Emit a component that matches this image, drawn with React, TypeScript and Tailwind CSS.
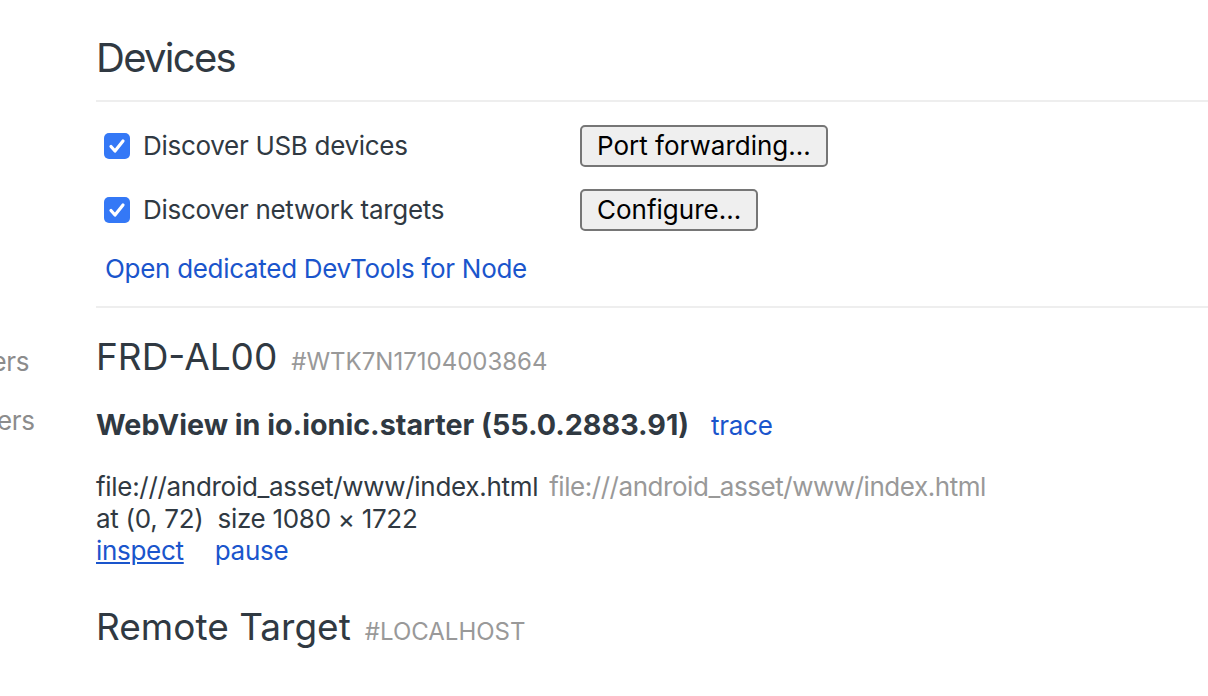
import React from "react";

const sidebarItems = [
  "Devices",
  "Pages",
  "Extensions",
  "Apps",
  "Shared workers",
  "Service workers",
  "Other",
];

function Checkbox() {
  return (
    <div className="w-[26px] h-[26px] rounded-[5px] bg-[#3478f6] flex items-center justify-center flex-shrink-0">
      <svg className="w-[20px] h-[20px]" viewBox="0 0 20 20" fill="none">
        <path
          d="M4 10.5l4 4.5 8-10"
          stroke="white"
          strokeWidth={3.2}
          strokeLinecap="round"
          strokeLinejoin="round"
        />
      </svg>
    </div>
  );
}

function OptionRow({ label, button }: { label: string; button: string }) {
  return (
    <div className="flex items-center h-[64px]">
      <div className="w-[476px] flex items-center gap-[13px]">
        <Checkbox />
        <span>{label}</span>
      </div>
      <button
        type="button"
        className="h-[42px] px-[15px] bg-[#efefef] border-2 border-[#767676] rounded-[5px] text-black leading-none tracking-normal"
      >
        {button}
      </button>
    </div>
  );
}

export default function App() {
  return (
    <div
      className="w-[1208px] h-[696px] overflow-hidden bg-white flex text-[26px] leading-[32px] tracking-[-0.3px] text-[#303942]"
      style={{ fontFamily: "Inter, 'Noto Sans', sans-serif" }}
    >
      {/* Sidebar, cut off at the left edge */}
      <div className="w-[96px] flex-shrink-0 overflow-hidden pt-[96px]">
        <div className="-ml-[160px] whitespace-nowrap text-[#8c8c8c]">
          {sidebarItems.map((s) => (
            <div key={s} className="h-[59px] flex items-center">
              {s}
            </div>
          ))}
        </div>
      </div>

      {/* Main content */}
      <div className="flex-1 min-w-0 pt-[34px]">
        <h1 className="text-[40px] leading-[48px] font-normal tracking-[-1.7px]">
          Devices
        </h1>
        <div className="mt-[18px] border-t-2 border-[#eeeeee]" />

        <div className="pl-[8px] pt-[12px]">
          <OptionRow label="Discover USB devices" button="Port forwarding..." />
          <OptionRow label="Discover network targets" button="Configure..." />
          <div className="mt-[11px] pl-[1px]">
            <a className="text-[#1a55cc] cursor-pointer">
              Open dedicated DevTools for Node
            </a>
          </div>
        </div>
        <div className="mt-[21px] border-t-2 border-[#eeeeee]" />

        {/* Device */}
        <div className="mt-[27px] flex items-baseline tracking-normal">
          <span className="text-[37px] leading-[44px]">FRD-AL00</span>
          <span className="ml-[14px] text-[24px] text-[#999999]">
            #WTK7N17104003864
          </span>
        </div>

        <div className="mt-[30px] flex items-baseline">
          <span className="font-bold text-[28.7px] tracking-normal">
            WebView in io.ionic.starter (55.0.2883.91)
          </span>
          <a className="ml-[22px] text-[#1a55cc] cursor-pointer">trace</a>
        </div>

        <div className="mt-[29px]">
          <div className="flex">
            <span>file:///android_asset/www/index.html</span>
            <span className="ml-[11px] text-[#999999] tracking-[-0.45px]">
              file:///android_asset/www/index.html
            </span>
          </div>
          <div className="flex">
            <span>at (0, 72)</span>
            <span className="ml-[14px]">size 1080 × 1722</span>
          </div>
          <div className="flex">
            <a className="text-[#1a55cc] underline cursor-pointer">inspect</a>
            <a className="ml-[31px] text-[#1a55cc] cursor-pointer">pause</a>
          </div>
        </div>

        <div className="mt-[38px] flex items-baseline tracking-normal">
          <span className="text-[37px] leading-[44px]">Remote Target</span>
          <span className="ml-[14px] text-[24px] text-[#999999]">
            #LOCALHOST
          </span>
        </div>
      </div>
    </div>
  );
}
